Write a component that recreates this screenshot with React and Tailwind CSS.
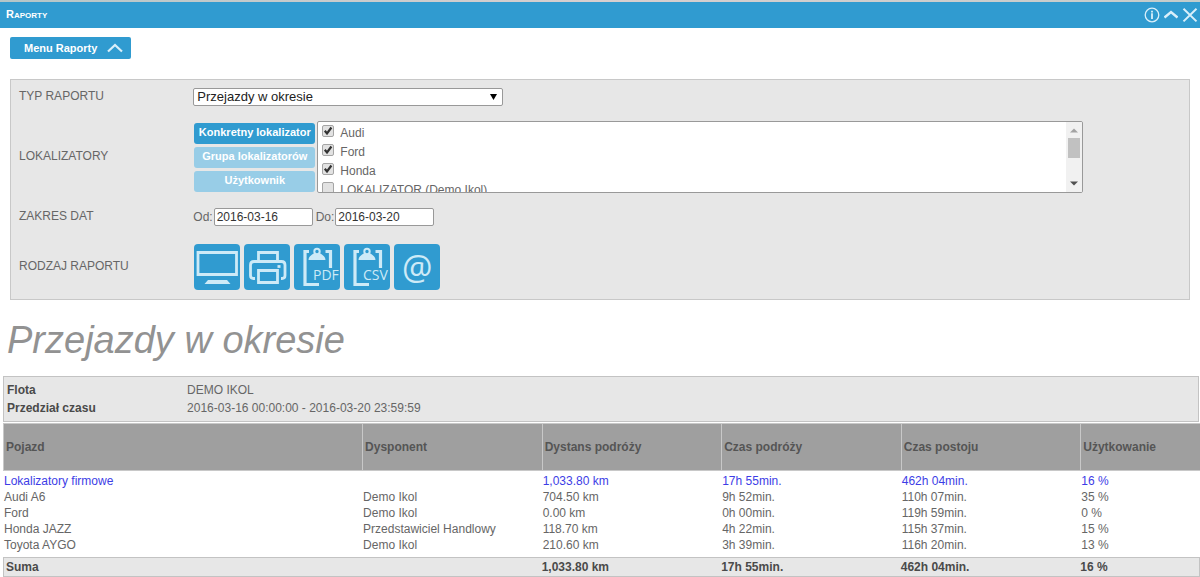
import { useState } from "react";

const locators = [
  { id: "audi", name: "Audi", checked: true },
  { id: "ford", name: "Ford", checked: true },
  { id: "honda", name: "Honda", checked: true },
  { id: "lokalizator", name: "LOKALIZATOR (Demo Ikol)", checked: false },
];

const modes = ["Konkretny lokalizator", "Grupa lokalizatorów", "Użytkownik"];

const columns = ["Pojazd", "Dysponent", "Dystans podróży", "Czas podróży", "Czas postoju", "Użytkowanie"];

const rows = [
  ["Lokalizatory firmowe", "", "1,033.80 km", "17h 55min.", "462h 04min.", "16 %"],
  ["Audi A6", "Demo Ikol", "704.50 km", "9h 52min.", "110h 07min.", "35 %"],
  ["Ford", "Demo Ikol", "0.00 km", "0h 00min.", "119h 59min.", "0 %"],
  ["Honda JAZZ", "Przedstawiciel Handlowy", "118.70 km", "4h 22min.", "115h 37min.", "15 %"],
  ["Toyota AYGO", "Demo Ikol", "210.60 km", "3h 39min.", "116h 20min.", "13 %"],
];

const summary = ["Suma", "", "1,033.80 km", "17h 55min.", "462h 04min.", "16 %"];

function TitleBar() {
  return (
    <header className="flex h-[26px] items-center justify-between bg-[#309bd0] pl-1.5 text-[#d9effa]">
      <h1 className="pb-0.5 text-[11px] leading-4 font-bold text-white [font-variant:small-caps]">Raporty</h1>
      <div className="flex items-center gap-1 pr-px">
        <button type="button" aria-label="Informacje">
          <svg width="16" height="16" viewBox="0 0 16 16" fill="none" stroke="currentColor" className="block">
            <circle cx="8" cy="8" r="6.8" strokeWidth="1.3" />
            <path d="M8 3.8v1.6M8 6.3v5.6" strokeWidth="1.8" />
          </svg>
        </button>
        <button type="button" aria-label="Zwiń">
          <svg width="14" height="16" viewBox="0 0 14 16" fill="none" stroke="currentColor" strokeWidth="2.4" className="block">
            <path d="M0.5 10.5L7 5l6.5 5.5" />
          </svg>
        </button>
        <button type="button" aria-label="Zamknij">
          <svg width="17" height="16" viewBox="0 0 17 16" fill="none" stroke="currentColor" strokeWidth="2" className="block">
            <path d="M1.5 1.8l13 12.6M14.5 1.8l-13 12.6" />
          </svg>
        </button>
      </div>
    </header>
  );
}

function FormRow({ label, htmlFor, className, children }) {
  return (
    <div className={`flex items-center ${className}`}>
      {htmlFor ? (
        <label htmlFor={htmlFor} className="w-[15%] pb-0.5">{label}</label>
      ) : (
        <span className="w-[15%] pb-0.5">{label}</span>
      )}
      <div className="flex min-w-0 flex-1 items-center">{children}</div>
    </div>
  );
}

function LocatorList() {
  const [items, setItems] = useState(locators);

  const toggle = (id) => {
    setItems(items.map((i) => (i.id === id ? { ...i, checked: !i.checked } : i)));
  };

  return (
    <div className="flex h-[72px] w-[77.5%] overflow-hidden rounded-xs border border-[#999] bg-white">
      <ul className="flex-1 overflow-hidden pl-1">
        {items.map((item) => (
          <li key={item.id} className="h-[19px]">
            <label className="flex items-start gap-1.5">
              <span className="relative mt-[3px] block h-3 w-3">
                <input
                  type="checkbox"
                  checked={item.checked}
                  onChange={() => toggle(item.id)}
                  className="peer block h-3 w-3 appearance-none rounded-xs border border-[#a5a5a5] bg-[#e2e2e2]"
                />
                <svg viewBox="0 0 12 12" className="pointer-events-none absolute inset-0 hidden h-3 w-3 peer-checked:block">
                  <path d="M2.8 5.8l2.2 2.7 4.4-6" fill="none" stroke="#333" strokeWidth="2.2" />
                </svg>
              </span>
              <span className="mt-0.5 leading-[18px]">{item.name}</span>
            </label>
          </li>
        ))}
      </ul>
      <div className="flex w-4 flex-col items-center bg-[#f1f1f1]">
        <svg width="8" height="16" viewBox="0 0 8 16" fill="#a3a3a3"><path d="M0 10.5h8L4 6.5z" /></svg>
        <div className="h-5 w-3 bg-[#c1c1c1]" />
        <svg width="8" height="16" viewBox="0 0 8 16" fill="#505050" className="mt-auto"><path d="M0 5.5h8L4 9.5z" /></svg>
      </div>
    </div>
  );
}

function Clipboard({ text }) {
  return (
    <svg viewBox="0 0 46 46" className="h-full w-full">
      <path d="M25 40.5H11V7.5h4M31.5 7.5h5V24" fill="none" stroke="currentColor" strokeWidth="3.2" />
      <path d="M14.5 16c0-3.500 2.500-4.500 5-6.500h7c2.500 2 5 3 5 6.500z" fill="currentColor" />
      <circle cx="23" cy="7.5" r="2.7" fill="#309bd0" stroke="currentColor" strokeWidth="2" />
      <text x="19" y="36" fontSize="14" fill="currentColor" className="font-['Open_Sans',sans-serif]">{text}</text>
    </svg>
  );
}

function ExportButton({ label, children }) {
  return (
    <button type="button" aria-label={label} className="h-[46px] w-[46px] rounded bg-[#309bd0] text-[#cdeaf7]">
      {children}
    </button>
  );
}

function ExportButtons() {
  return (
    <div className="ml-px flex gap-1">
      <ExportButton label="Ekran">
        <svg viewBox="0 0 46 46" className="h-full w-full">
          <path d="M4 8.5h38.500v22H4z" fill="none" stroke="currentColor" strokeWidth="2.8" />
          <path d="M14 36h19l3.500 4h-26z" fill="currentColor" />
        </svg>
      </ExportButton>
      <ExportButton label="Drukuj">
        <svg viewBox="0 0 46 46" className="h-full w-full" fill="none" stroke="currentColor" strokeWidth="2.8">
          <path d="M14.5 17V8.5h19V17" />
          <path d="M11 34.5H9.5q-3 0-3-3V21q0-3.500 3.500-3.500h27.500q3.500 0 3.500 3.500v10.500q0 3-3 3H37" />
          <path d="M14.5 26.5h19v12h-19z" />
          <path d="M33.5 22.5h3" />
        </svg>
      </ExportButton>
      <ExportButton label="PDF">
        <Clipboard text="PDF" />
      </ExportButton>
      <ExportButton label="CSV">
        <Clipboard text="CSV" />
      </ExportButton>
      <ExportButton label="E-mail">
        <span className="block font-['Open_Sans',sans-serif] text-[34px] leading-[46px]">@</span>
      </ExportButton>
    </div>
  );
}

function ReportForm() {
  const [mode, setMode] = useState(modes[0]);

  return (
    <form className="mx-2.5 mt-5 border border-[#c8c8c8] bg-[#e7e7e7] px-2 pt-1.5 pb-2" onSubmit={(e) => e.preventDefault()}>
      <FormRow label="TYP RAPORTU" htmlFor="type" className="h-[22px]">
        <div className="relative w-[310px]">
          <select
            id="type"
            className="block h-[18px] w-full appearance-none rounded-xs border border-[#999] bg-white pl-[3px] text-[13px] leading-4 text-[#222]"
          >
            <option>Przejazdy w okresie</option>
          </select>
          <svg width="7" height="6" viewBox="0 0 7 6" className="pointer-events-none absolute top-1.5 right-1.5 fill-black">
            <path d="M0 0h7L3.500 6z" />
          </svg>
        </div>
      </FormRow>

      <FormRow label="LOKALIZATORY" className="mt-[13px] h-[72px]">
        <div className="mr-0.5 ml-px flex w-[121px] shrink-0 flex-col gap-[3px]">
          {modes.map((m) => (
            <button
              key={m}
              type="button"
              onClick={() => setMode(m)}
              className={`h-[21px] rounded-[3px] pb-0.5 text-[11px] font-bold whitespace-nowrap text-white ${mode === m ? "bg-[#309bd0]" : "bg-[#98cde7]"}`}
            >
              {m}
            </button>
          ))}
        </div>
        <LocatorList />
      </FormRow>

      <FormRow label="ZAKRES DAT" className="mt-3.5 h-5">
        <label htmlFor="from" className="mr-px">Od:</label>
        <input
          id="from"
          defaultValue="2016-03-16"
          className="mr-[3px] h-[18px] w-[99px] rounded-xs border border-[#999] bg-white pl-0.5 text-[#333]"
        />
        <label htmlFor="to" className="mr-px">Do:</label>
        <input
          id="to"
          defaultValue="2016-03-20"
          className="h-[18px] w-[99px] rounded-xs border border-[#999] bg-white pl-0.5 text-[#333]"
        />
      </FormRow>

      <FormRow label="RODZAJ RAPORTU" className="mt-4 h-12">
        <ExportButtons />
      </FormRow>
    </form>
  );
}

function ReportTable() {
  return (
    <table className="mt-px w-full table-fixed border-separate border-spacing-0">
      <colgroup>
        <col className="w-[30%]" />
        <col className="w-[15%]" />
        <col className="w-[15%]" />
        <col className="w-[15%]" />
        <col className="w-[15%]" />
        <col className="w-[10%]" />
      </colgroup>
      <thead>
        <tr className="h-12 bg-[#9f9f9f] text-left text-[#555]">
          {columns.map((c) => (
            <th key={c} className="border-y border-l border-[#c8c8c8] px-0.5 font-bold">{c}</th>
          ))}
        </tr>
      </thead>
      <tbody>
        <tr className="h-0.5"><td colSpan={6} /></tr>
        {rows.map((row, i) => (
          <tr key={row[0]} className={i === 0 ? "h-4 text-[#3d3de6]" : "h-4"}>
            {row.map((cell, j) => (
              <td key={j} className="px-px">{cell}</td>
            ))}
          </tr>
        ))}
        <tr className="h-1"><td colSpan={6} /></tr>
      </tbody>
      <tfoot>
        <tr className="h-5 bg-[#e7e7e7] font-bold text-[#4a4a4a]">
          {summary.map((cell, j) => (
            <td key={j} className="border-y border-[#c3c3c3] first:border-l first:pl-0.5 last:border-r">{cell}</td>
          ))}
        </tr>
      </tfoot>
    </table>
  );
}

export default function App() {
  return (
    <main className="bg-white font-['Liberation_Sans',Arial,sans-serif] text-[12px] leading-4 text-[#666]">
      {/* sliver of the map behind the window */}
      <div className="h-0.5 bg-linear-to-r from-[#b4c6c8] via-[#d8cfcf] to-[#c3cccb]" />
      <TitleBar />

      <button type="button" className="mt-[9px] ml-2.5 flex h-[22px] items-center gap-2.5 rounded-xs bg-[#309bd0] pr-2 pb-px pl-3.5 text-[11px] font-bold text-white">
        Menu Raporty
        <svg width="16" height="10" viewBox="0 0 16 10" fill="none" stroke="#d9effa" strokeWidth="2.2">
          <path d="M1 8.5L8 2l7 6.5" />
        </svg>
      </button>

      <ReportForm />

      <h2 className="mt-4 ml-[7px] text-[38px] leading-[48px] text-[#929292] italic">Przejazdy w okresie</h2>

      <section className="mt-3 ml-[3px]">
        <div className="mr-px border border-[#c3c3c3] bg-[#e7e7e7] py-1">
          <table className="w-full table-fixed text-left">
            <tbody>
              <tr className="h-[18px]">
                <th className="w-[15%] pl-[3px] font-bold text-[#4a4a4a]">Flota</th>
                <td className="pl-1">DEMO IKOL</td>
              </tr>
              <tr className="h-[18px]">
                <th className="pl-[3px] font-bold text-[#4a4a4a]">Przedział czasu</th>
                <td className="pl-1">2016-03-16 00:00:00 - 2016-03-20 23:59:59</td>
              </tr>
            </tbody>
          </table>
        </div>
        <ReportTable />
      </section>
    </main>
  );
}
